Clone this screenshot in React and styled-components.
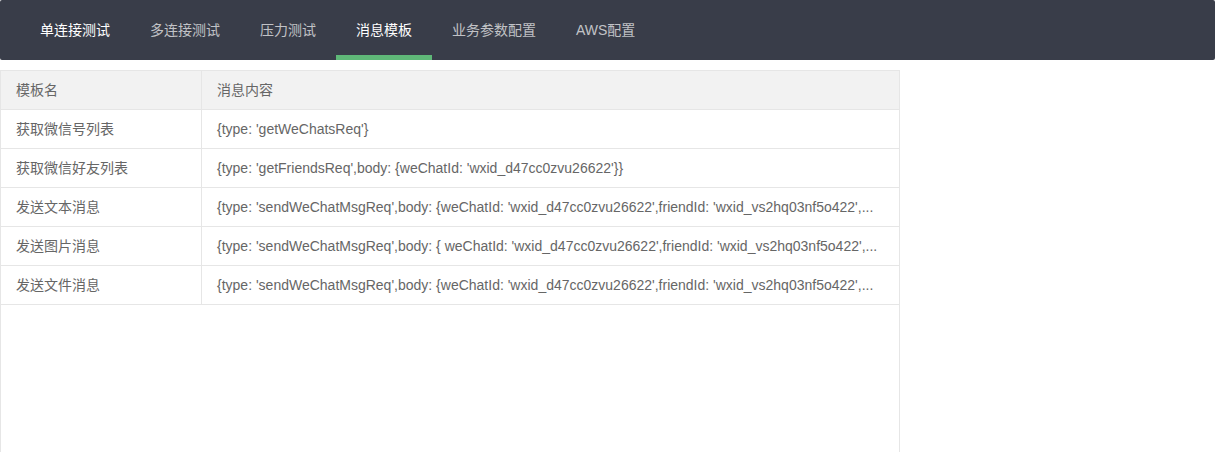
import styled, { createGlobalStyle } from "styled-components";

const Global = createGlobalStyle`
  html, body {
    margin: 0;
    padding: 0;
    background: #fff;
    font-family: "Liberation Sans", Arial, "Noto Sans CJK SC", sans-serif;
    font-size: 14px;
    color: #666;
  }
`;

const Nav = styled.ul`
  display: flex;
  margin: 0;
  padding: 0 20px;
  height: 60px;
  list-style: none;
  background-color: #393d49;
  border-radius: 2px;
`;

const NavItem = styled.li`
  position: relative;
  padding: 0 20px;
  line-height: 60px;
  font-size: 14px;
  color: ${(p) => (p.$active || p.$hover ? "#fff" : "rgba(255, 255, 255, 0.7)")};
  cursor: pointer;

  &::after {
    content: "";
    display: ${(p) => (p.$active ? "block" : "none")};
    position: absolute;
    left: 0;
    right: 0;
    bottom: 0;
    height: 5px;
    background-color: #5fb878;
  }
`;

const TableView = styled.div`
  box-sizing: border-box;
  width: 900px;
  height: 383px;
  margin: 10px 0 0;
  border: 1px solid #e6e6e6;
`;

const Row = styled.div`
  display: grid;
  grid-template-columns: 201px 1fr;
  height: 39px;
  box-sizing: border-box;
  border-bottom: 1px solid #e6e6e6;
  background: ${(p) => (p.$head ? "#f2f2f2" : "#fff")};
`;

const Cell = styled.div`
  box-sizing: border-box;
  min-width: 0;
  padding: 0 15px;
  line-height: 38px;
  white-space: nowrap;
  overflow: hidden;
  color: #666;

  &:first-child {
    border-right: 1px solid #e6e6e6;
  }
`;

const tabs = ["单连接测试", "多连接测试", "压力测试", "消息模板", "业务参数配置", "AWS配置"];

// message column is shown clipped, as in the grid view
const rows = [
  ["获取微信号列表", "{type: 'getWeChatsReq'}"],
  ["获取微信好友列表", "{type: 'getFriendsReq',body: {weChatId: 'wxid_d47cc0zvu26622'}}"],
  ["发送文本消息", "{type: 'sendWeChatMsgReq',body: {weChatId: 'wxid_d47cc0zvu26622',friendId: 'wxid_vs2hq03nf5o422',..."],
  ["发送图片消息", "{type: 'sendWeChatMsgReq',body: { weChatId: 'wxid_d47cc0zvu26622',friendId: 'wxid_vs2hq03nf5o422',..."],
  ["发送文件消息", "{type: 'sendWeChatMsgReq',body: {weChatId: 'wxid_d47cc0zvu26622',friendId: 'wxid_vs2hq03nf5o422',..."],
];

const App = () => {
  return (
    <>
      <Global />
      <Nav>
        {tabs.map((t, i) => (
          <NavItem key={t} $active={t === "消息模板"} $hover={i === 0}>
            {t}
          </NavItem>
        ))}
      </Nav>
      <TableView>
        <Row $head>
          <Cell>模板名</Cell>
          <Cell>消息内容</Cell>
        </Row>
        {rows.map(([name, msg]) => (
          <Row key={name}>
            <Cell>{name}</Cell>
            <Cell>{msg}</Cell>
          </Row>
        ))}
      </TableView>
    </>
  );
};

export default App;
